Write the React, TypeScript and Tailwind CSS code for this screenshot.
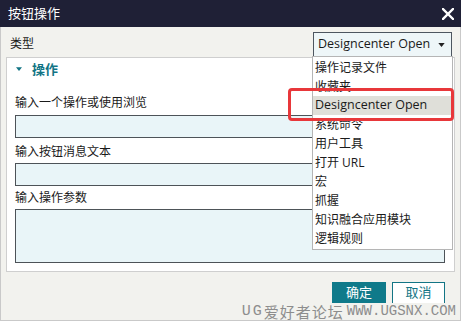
import { useState } from 'react'

const OPTIONS = [
  '操作记录文件',
  '收藏夹',
  'Designcenter Open',
  '系统命令',
  '用户工具',
  '打开 URL',
  '宏',
  '抓握',
  '知识融合应用模块',
  '逻辑规则',
]

const FONT = "font-['Open_Sans','Noto_Sans_CJK_SC',sans-serif]"

function Caret({ className }: { className: string }) {
  return (
    <svg viewBox="0 0 8 5" className={className}>
      <path d="M0 0 L8 0 L4 5 Z" fill="currentColor" />
    </svg>
  )
}

export default function App() {
  const [selected] = useState('Designcenter Open')

  return (
    <div className={`relative w-[461px] h-[321px] bg-[#f2f2ee] flex flex-col border-l border-r border-b border-[#c9c9c9] text-[12px] text-[#1a1a1a] ${FONT}`}>
      {/* Title bar */}
      <div className="h-[27px] -mx-px bg-[#1f2036] flex items-center justify-between pl-[8px] pr-[7px]">
        <span className="text-[13px] text-white leading-none">按钮操作</span>
        <svg viewBox="0 0 12 12" className="w-[12px] h-[12px] text-white">
          <path d="M1 1 L11 11 M11 1 L1 11" stroke="currentColor" strokeWidth="2.4" strokeLinecap="square" />
        </svg>
      </div>

      {/* Type row */}
      <div className="flex items-start justify-between pl-[9px] pr-[8px] pt-[5px] h-[30px]">
        <span className="mt-[4px] leading-[16px]">类型</span>
        <div className="w-[139px] h-[25px] bg-[#eef6f8] border border-[#4d5660] flex items-center justify-between pl-[4px] pr-[6px]">
          <span className="text-[12.5px] leading-none">{selected}</span>
          <Caret className="w-[7px] h-[4px] text-[#222]" />
        </div>
      </div>

      {/* Group panel */}
      <div className="mx-[5px] bg-white border border-[#cfcfcf] px-[8px] pb-[8px]">
        <div className="h-[22px] flex items-center pl-[1px]">
          <Caret className="w-[6px] h-[4px] text-[#137585]" />
          <span className="ml-[10px] text-[13px] font-bold text-[#137585] leading-none">操作</span>
        </div>
        <div className="mt-[14px] leading-[18px]">输入一个操作或使用浏览</div>
        <div className="mt-[3px] h-[23px] mr-[1px] bg-[#e9f5f8] border border-[#4d5358]" />
        <div className="mt-[5px] leading-[18px]">输入按钮消息文本</div>
        <div className="mt-[2px] h-[23px] mr-[1px] bg-[#e9f5f8] border border-[#4d5358]" />
        <div className="mt-[3px] leading-[18px]">输入操作参数</div>
        <div className="mt-[2px] h-[54px] mr-[1px] bg-[#e9f5f8] border border-[#4d5358]" />
      </div>

      {/* Buttons */}
      <div className="mt-[10px] flex justify-end gap-[6px] pr-[15px]">
        <button className="w-[54px] h-[25px] bg-[#0f7a8a] text-white text-[13px] leading-none pb-[4px]">确定</button>
        <button className="w-[53px] h-[25px] bg-white border border-[#137585] text-[#137585] text-[13px] leading-none pb-[4px]">取消</button>
      </div>

      {/* Dropdown list */}
      <div className="absolute left-[311px] top-[56px] w-[141px] bg-white border border-[#b5b5b5] py-px">
        {OPTIONS.map((o) => (
          <div
            key={o}
            className={`h-[19px] flex items-center pl-[2px] ${o === selected ? 'bg-[#dfdfd9] text-[12.5px]' : ''}`}
          >
            {o}
          </div>
        ))}
      </div>

      {/* Red highlight annotation */}
      <div className="absolute left-[287px] top-[88px] w-[166px] h-[33px] border-[3.5px] border-[#e8373a] rounded-[4px]" />

      {/* Watermark */}
      <div className="absolute right-[4px] bottom-[1px] h-[16px] bg-[#f2f2ee] flex items-center text-[#8d8d8d] leading-none">
        <span className="font-['Liberation_Mono',monospace] text-[15px] tracking-[2px]">UG</span>
        <span className="font-['Noto_Sans_CJK_SC',sans-serif] text-[15px] tracking-[1px]">爱好者论坛</span>
        <span className="font-['Liberation_Mono',monospace] text-[14px] ml-[3px]">WWW.UGSNX.COM</span>
      </div>
    </div>
  )
}
